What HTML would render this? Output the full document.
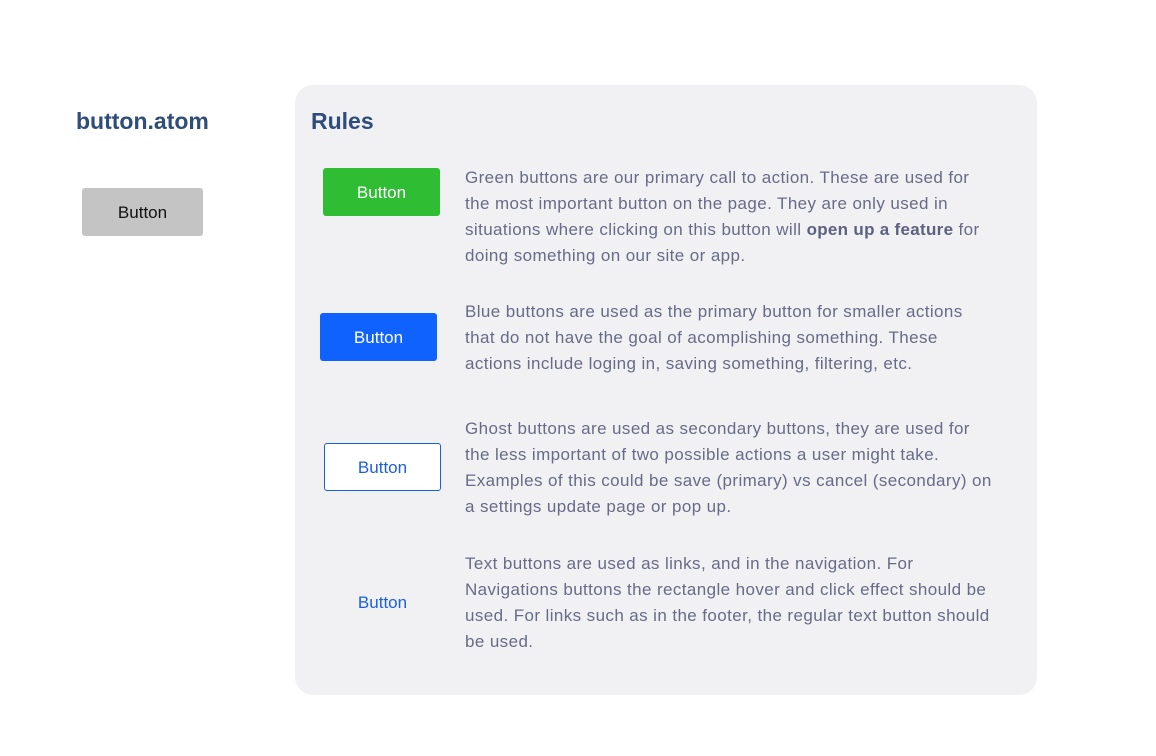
<!DOCTYPE html>
<html><head><style>
body{margin:0;width:1156px;height:756px;background:#fff;font-family:"Liberation Sans",Arial,sans-serif;position:relative;overflow:hidden}
.a{position:absolute}
h1{position:absolute;margin:0;font-size:23px;font-weight:bold;color:#2e4d7b;line-height:30px}
.btn{position:absolute;display:flex;align-items:center;justify-content:center;font-size:17px;border-radius:3px;box-sizing:border-box;padding-top:1px}
.p{position:absolute;left:465px;font-size:17px;line-height:26px;color:#676b88;white-space:nowrap;letter-spacing:0.4px}
.p b{color:#5d6180;letter-spacing:0.3px}
</style></head><body>
<h1 style="left:76px;top:106px">button.atom</h1>
<div class="btn" style="left:82px;top:188px;width:121px;height:48px;background:#c4c4c4;color:#111">Button</div>
<div class="a" style="left:295px;top:85px;width:742px;height:610px;background:#f1f1f3;border-radius:18px"></div>
<h1 style="left:311px;top:106px">Rules</h1>
<div class="btn" style="left:323px;top:168px;width:117px;height:48px;background:#2ebd33;color:#fff">Button</div>
<div class="p" style="top:165px">Green buttons are our primary call to action. These are used for<br>the most important button on the page. They are only used in<br>situations where clicking on this button will <b>open up a feature</b> for<br>doing something on our site or app.</div>
<div class="btn" style="left:320px;top:313px;width:117px;height:48px;background:#0f62fe;color:#fff">Button</div>
<div class="p" style="top:299px">Blue buttons are used as the primary button for smaller actions<br>that do not have the goal of acomplishing something. These<br>actions include loging in, saving something, filtering, etc.</div>
<div class="btn" style="left:324px;top:443px;width:117px;height:48px;background:#fff;border:1px solid #1b5fe0;color:#1b5fe0">Button</div>
<div class="p" style="top:416px">Ghost buttons are used as secondary buttons, they are used for<br>the less important of two possible actions a user might take.<br>Examples of this could be save (primary) vs cancel (secondary) on<br>a settings update page or pop up.</div>
<div class="btn" style="left:324px;top:578px;width:117px;height:48px;color:#1b5fe0">Button</div>
<div class="p" style="top:551px">Text buttons are used as links, and in the navigation. For<br>Navigations buttons the rectangle hover and click effect should be<br>used. For links such as in the footer, the regular text button should<br>be used.</div>
</body></html>
